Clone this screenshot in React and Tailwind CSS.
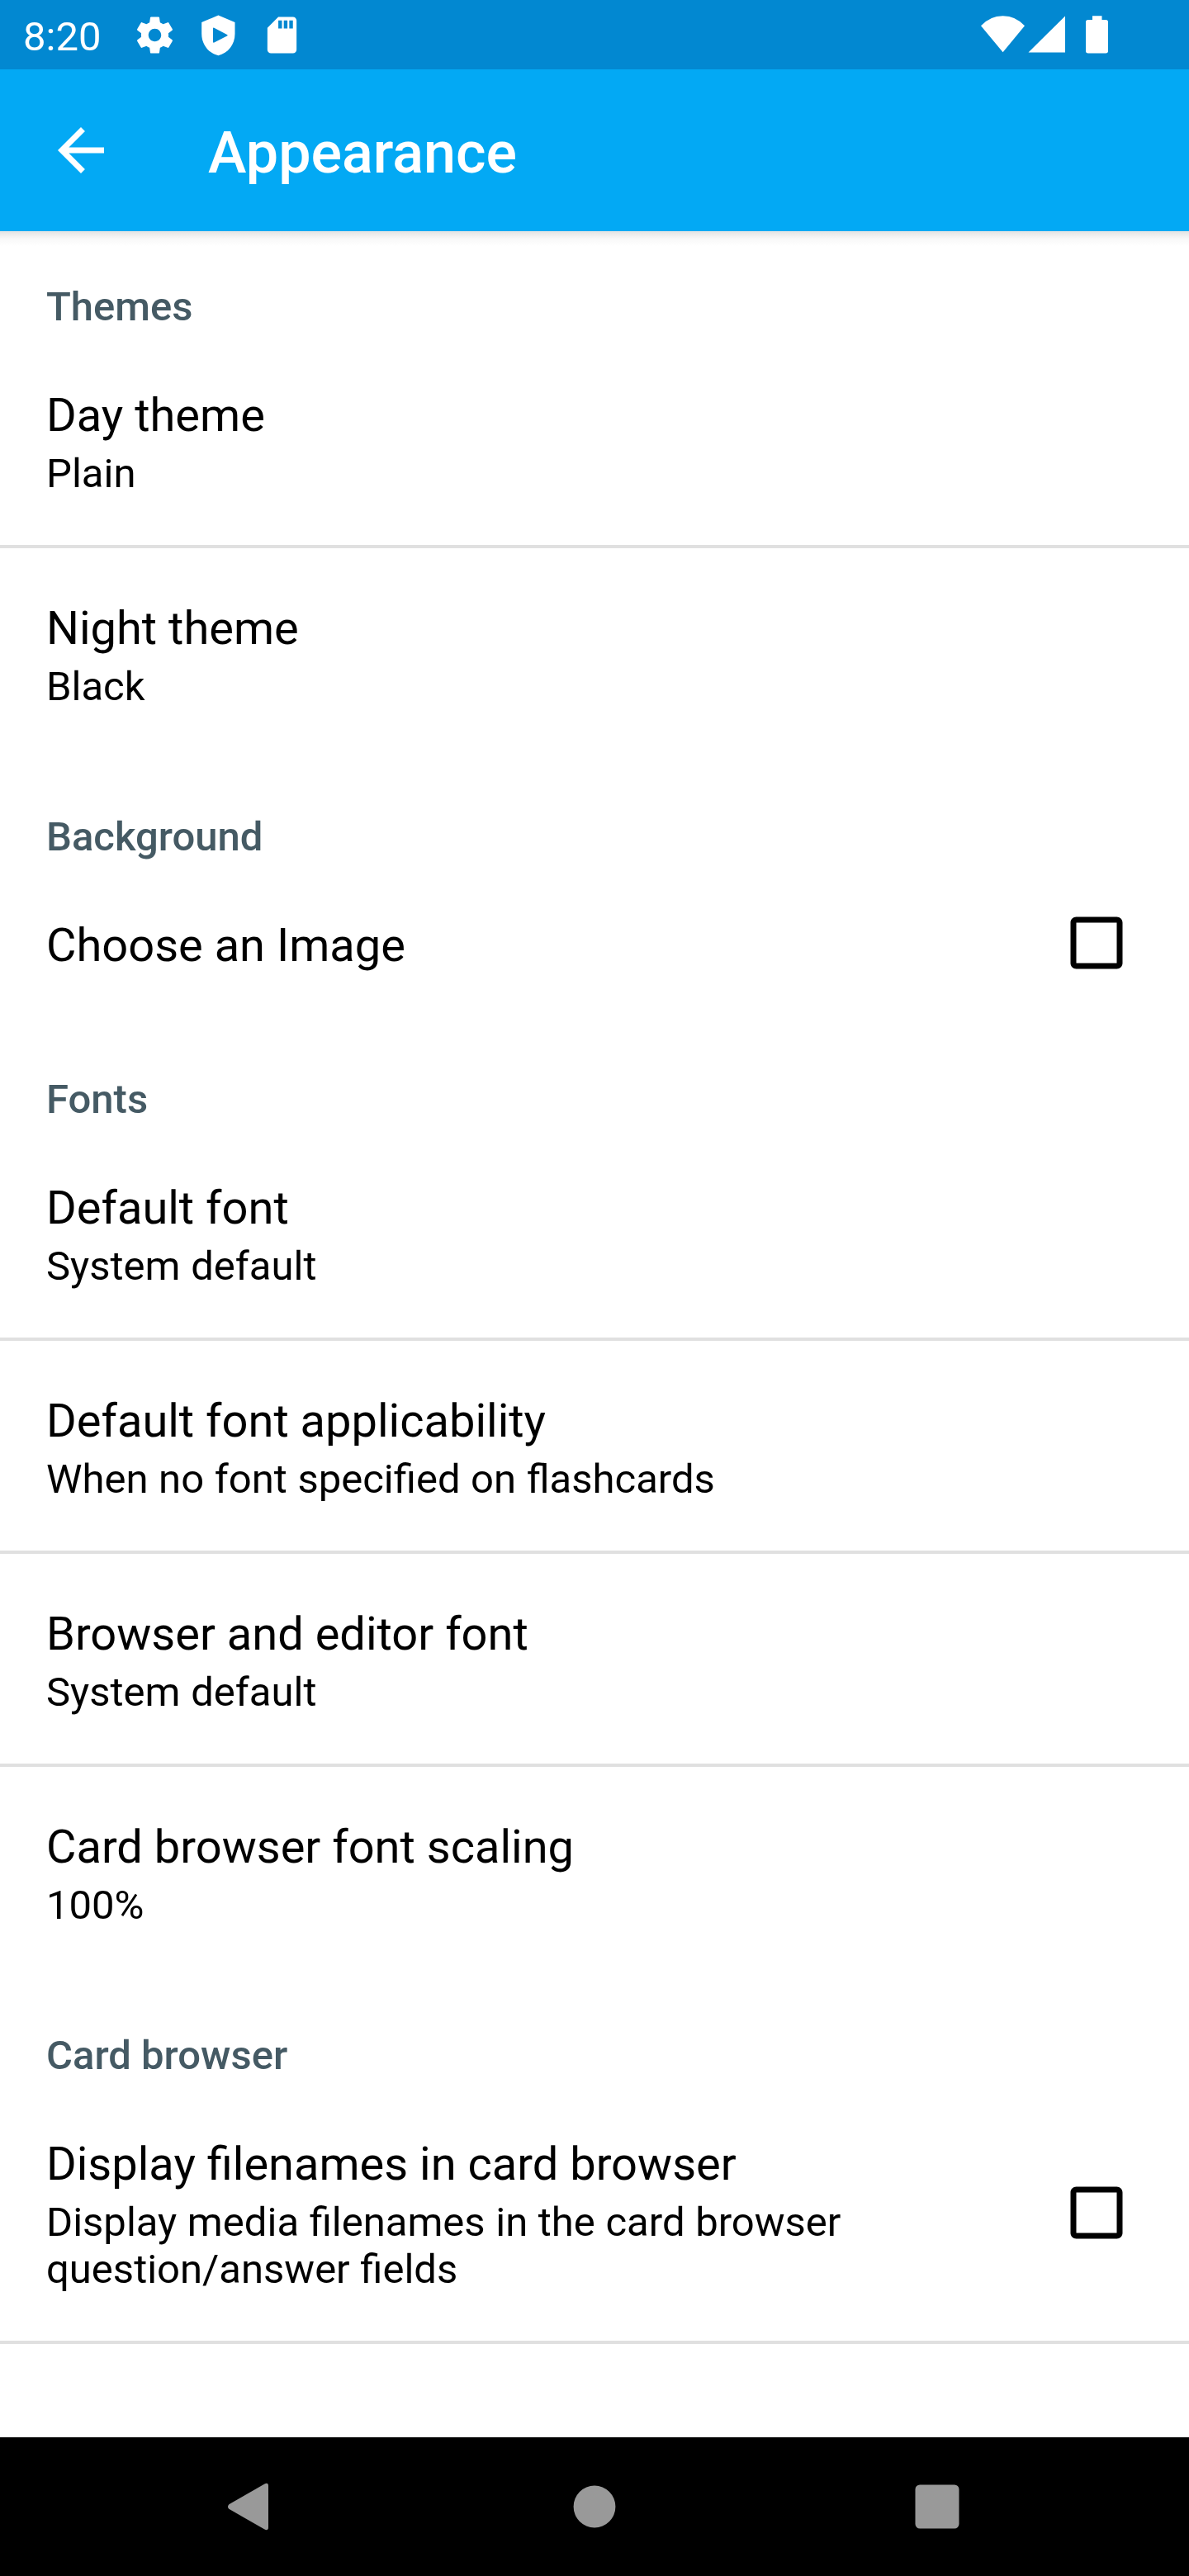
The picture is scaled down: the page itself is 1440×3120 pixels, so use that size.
import React from "react";

function StatusBar() {
  return (
    <div className="flex h-[84px] shrink-0 items-center bg-[#0288d1] text-white">
      <span className="ml-[28px] w-[133px] pt-[5px] text-[49px] leading-[57px]">8:20</span>
      <svg className="h-[53px] w-[53px]" viewBox="0 0 24 24" fill="currentColor">
        <path d="M19.43 12.98c.04-.32.07-.64.07-.98s-.03-.66-.07-.98l2.11-1.65c.19-.15.24-.42.12-.64l-2-3.46c-.12-.22-.39-.3-.61-.22l-2.49 1c-.52-.4-1.08-.73-1.69-.98l-.38-2.65C14.46 2.18 14.25 2 14 2h-4c-.25 0-.46.18-.49.42l-.38 2.65c-.61.25-1.17.59-1.69.98l-2.49-1c-.23-.09-.49 0-.61.22l-2 3.46c-.13.22-.07.49.12.64l2.11 1.65c-.04.32-.07.65-.07.98s.03.66.07.98l-2.11 1.65c-.19.15-.24.42-.12.64l2 3.46c.12.22.39.3.61.22l2.49-1c.52.4 1.08.73 1.69.98l.38 2.65c.03.24.24.42.49.42h4c.25 0 .46-.18.49-.42l.38-2.65c.61-.25 1.17-.59 1.69-.98l2.49 1c.23.09.49 0 .61-.22l2-3.46c.12-.22.07-.49-.12-.64l-2.11-1.65zM12 15.5c-1.93 0-3.5-1.57-3.5-3.5s1.57-3.5 3.5-3.5 3.5 1.57 3.5 3.5-1.57 3.5-3.5 3.5z" />
      </svg>
      <svg className="ml-[24px] h-[53px] w-[53px]" viewBox="0 0 53 53" fill="currentColor">
        <path
          fillRule="evenodd"
          d="M26.4 2.5L46.5 11V25C46.5 38 38 48.5 26.4 51.2C14.8 48.5 6.2 38 6.2 25V11ZM20 18.6V34.6Q20 36.2 21.4 35.4L37 27.6Q38.2 26.8 37 26.1L21.4 17.8Q20 17.1 20 18.6Z"
        />
      </svg>
      <svg className="ml-[24px] h-[53px] w-[53px]" viewBox="0 0 24 24" fill="currentColor">
        <path d="M18 2h-8L4.02 8 4 20c0 1.1.9 2 2 2h12c1.1 0 2-.9 2-2V4c0-1.1-.9-2-2-2zm-6 6.4h-2V4h2v4.4zm3 0h-2V4h2v4.4zm3 0h-2V4h2v4.4z" />
      </svg>
      <svg className="mr-[98px] ml-auto h-[84px] w-[154px]" viewBox="0 0 154 84" fill="currentColor">
        <path d="M0 31.3Q11 19.2 26.6 19.2T53 31.3L26.6 63.3Z" />
        <path d="M102 19.5V63.5H57.5Z" />
        <path d="M135 19.2h11.5V24h4.7q2.8 0 2.8 2.8v35q0 2.7-2.8 2.7h-21.4q-2.8 0-2.8-2.7v-35q0-2.8 2.8-2.8h5.2z" />
      </svg>
    </div>
  );
}

function AppBar() {
  return (
    <header className="flex h-[196px] shrink-0 items-center bg-[#03a9f4] text-white">
      <svg className="ml-[56px] h-[84px] w-[84px]" viewBox="0 0 24 24" fill="currentColor">
        <path d="M20 11H7.83l5.59-5.59L12 4l-8 8 8 8 1.41-1.41L7.83 13H20v-2z" />
      </svg>
      <h1 className="ml-[112px] pt-[6px] text-[70px] leading-[82px] font-medium">Appearance</h1>
    </header>
  );
}

function Category({ title, children }) {
  return (
    <section>
      <h2 className="px-[56px] pt-[63px] pb-[6px] text-[49px] leading-[57px] font-medium text-[#455a64]">
        {title}
      </h2>
      {children}
    </section>
  );
}

function Preference({ title, summary, checkbox, divider }) {
  return (
    <div
      className={
        "flex items-center border-b-4 pr-[70px] pl-[56px] " +
        (divider ? "border-[#e0e0e0]" : "border-transparent")
      }
    >
      <div className="w-[1070px] pt-[64px] pb-[58px] text-black">
        <div className="text-[56px] leading-[66px]">{title}</div>
        {summary && (
          <div className="mt-[9px] text-[49px] leading-[57px] [word-spacing:0.45px]">{summary}</div>
        )}
      </div>
      {checkbox && (
        <svg className="ml-auto h-[84px] w-[84px]" viewBox="0 0 24 24">
          <path
            fill="#000"
            d="M19 5v14H5V5h14m0-2H5c-1.1 0-2 .9-2 2v14c0 1.1.9 2 2 2h14c1.1 0 2-.9 2-2V5c0-1.1-.9-2-2-2z"
          />
        </svg>
      )}
    </div>
  );
}

function NavigationBar() {
  return (
    <nav className="flex h-[168px] shrink-0 items-center justify-center gap-[331px] bg-black">
      <svg className="h-[84px] w-[84px]" viewBox="0 0 84 84" fill="#999">
        <path d="M14.3 39.2L57 14.7Q62 12.2 62 17V67Q62 71.8 57 69.3L14.3 44.8Q11.7 42 14.3 39.2Z" />
      </svg>
      <svg className="h-[84px] w-[84px]" viewBox="0 0 84 84" fill="#999">
        <circle cx="42" cy="42" r="25.4" />
      </svg>
      <svg className="h-[84px] w-[84px]" viewBox="0 0 84 84" fill="#999">
        <rect x="15.5" y="15.5" width="53" height="53" rx="5.5" />
      </svg>
    </nav>
  );
}

export default function App() {
  return (
    <div className="flex h-[3120px] w-[1440px] flex-col overflow-hidden bg-white font-['Roboto',sans-serif]">
      <StatusBar />
      <AppBar />
      <main className="min-h-0 flex-1 overflow-hidden bg-linear-to-b from-[#e3e3e3] via-[#f8f8f8] via-[9px] to-white to-[18px]">
        <Category title="Themes">
          <Preference title="Day theme" summary="Plain" divider />
          <Preference title="Night theme" summary="Black" />
        </Category>
        <Category title="Background">
          <Preference title="Choose an Image" checkbox />
        </Category>
        <Category title="Fonts">
          <Preference title="Default font" summary="System default" divider />
          <Preference title="Default font applicability" summary="When no font specified on flashcards" divider />
          <Preference title="Browser and editor font" summary="System default" divider />
          <Preference title="Card browser font scaling" summary="100%" />
        </Category>
        <Category title="Card browser">
          <Preference
            title="Display filenames in card browser"
            summary="Display media filenames in the card browser question/answer fields"
            checkbox
            divider
          />
        </Category>
      </main>
      <NavigationBar />
    </div>
  );
}
